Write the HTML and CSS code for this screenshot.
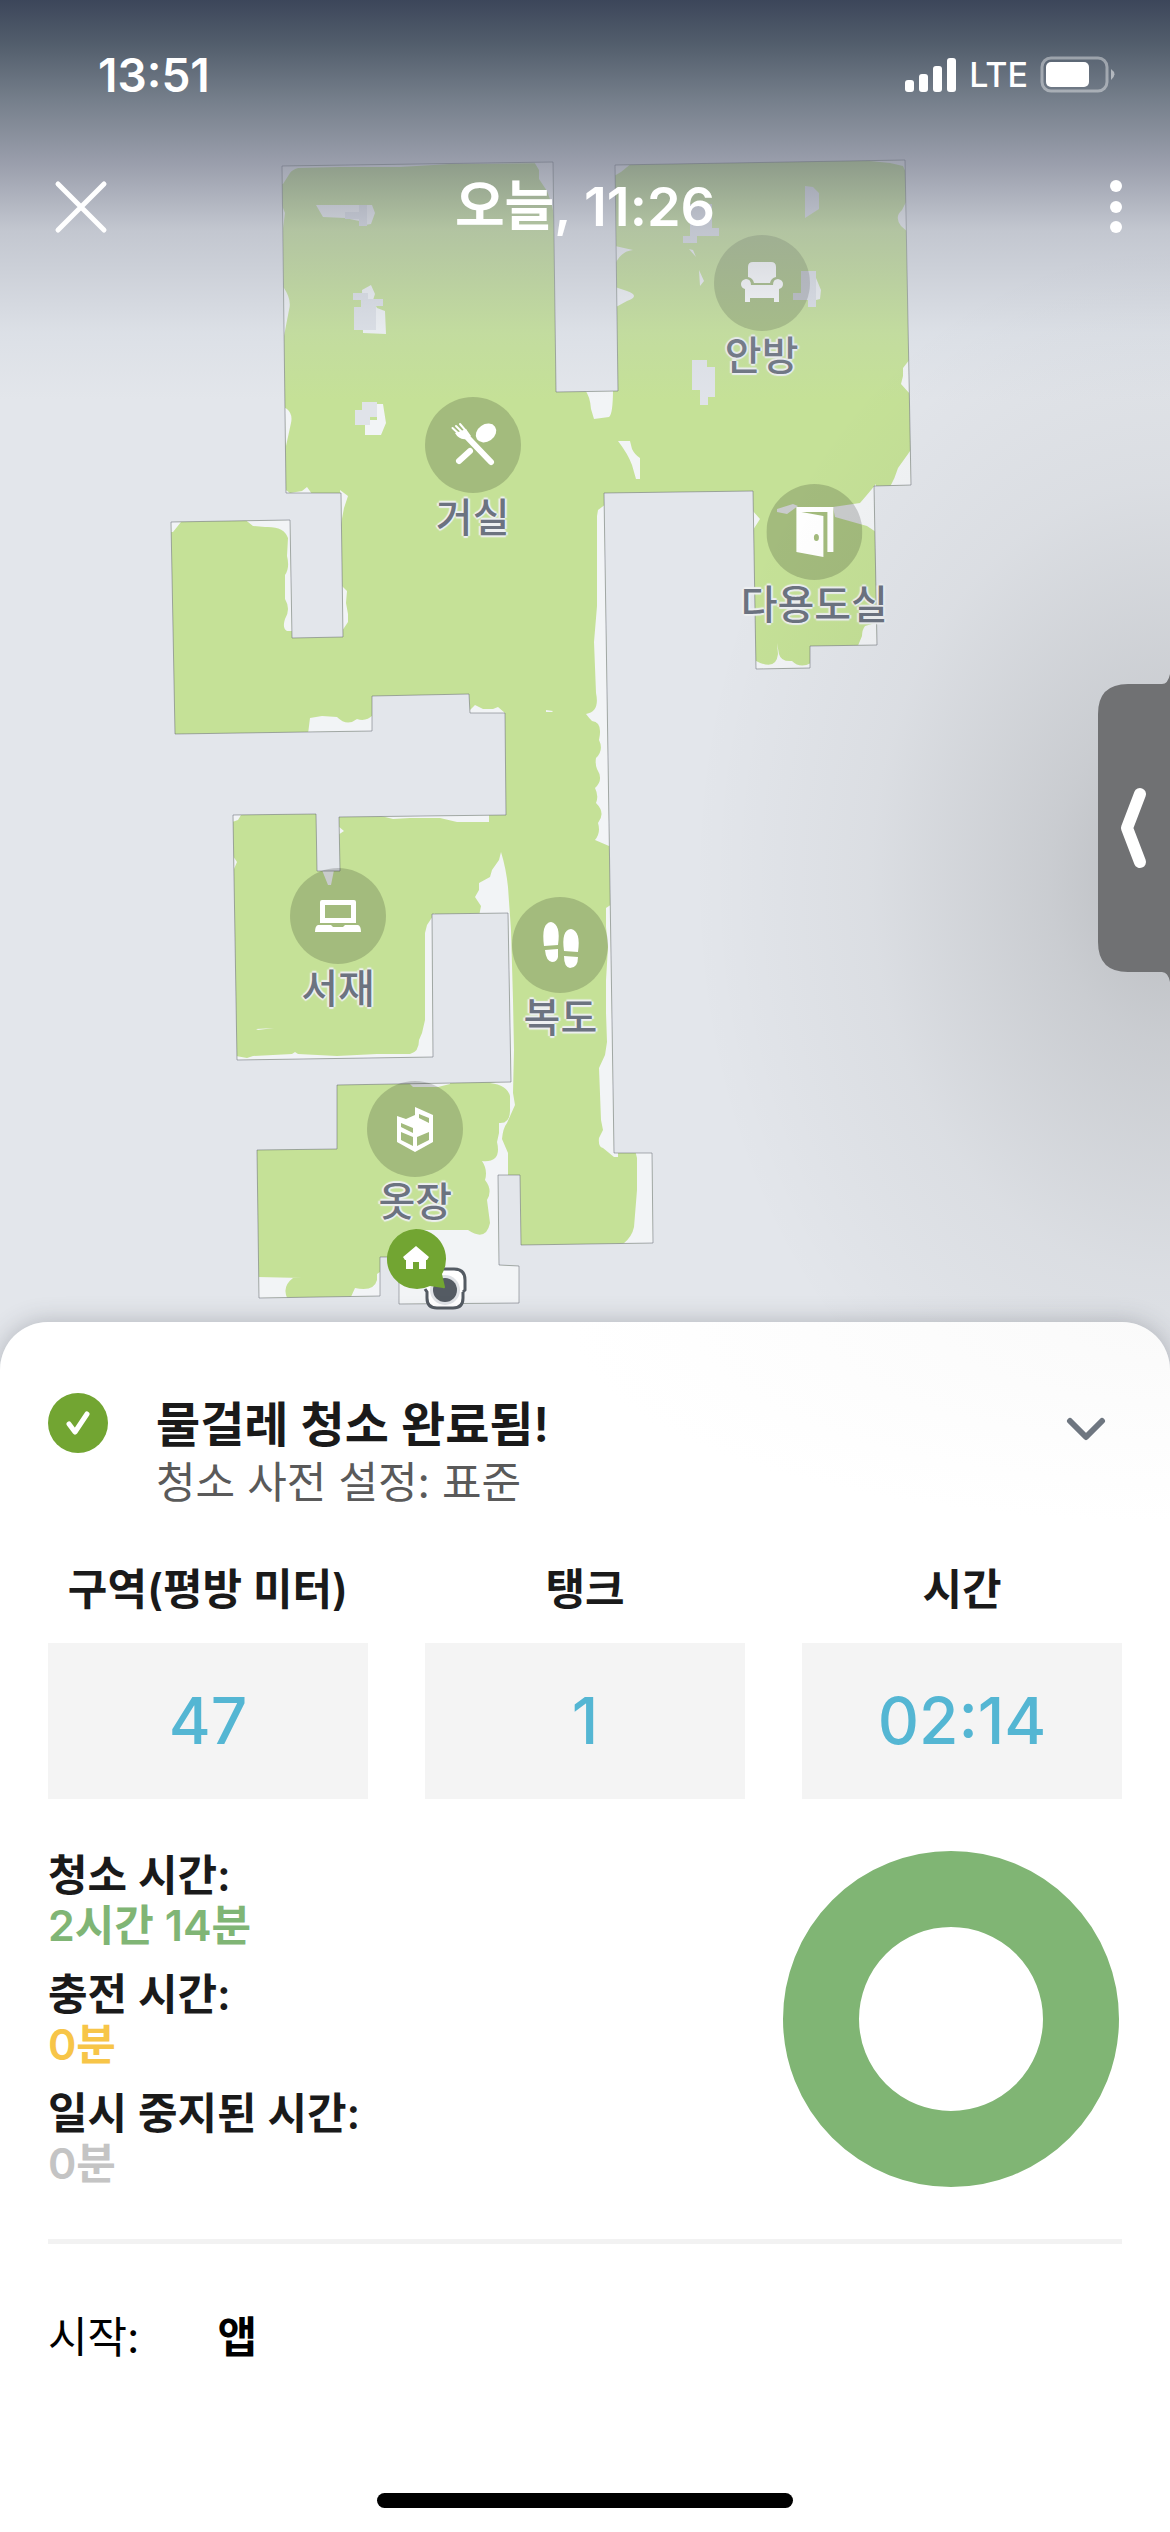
FILE: index.html
```html
<!DOCTYPE html>
<html lang="ko">
<head>
<meta charset="utf-8">
<meta name="viewport" content="width=device-width, initial-scale=1">
<title>청소 기록</title>
<link rel="stylesheet" href="styles.css">
</head>
<body>
<main class="screen">
  <section class="map">
    <svg class="map-plan" viewBox="0 0 1170 1380" aria-hidden="true">
      <defs>
        <path id="plan" d="M282 166L553 162L556 392L618 391L615 165L905 160L911 485L874 486L877 645L810 646L810 668L756 669L753 491L604 493L614 1153L652 1153L653 1243L521 1245L520 1175L498 1175L499 1265L519 1266L519 1303L399 1304L399 1257L380 1257L380 1296L259 1298L257 1150L337 1149L337 1085L511 1082L508 913L432 914L433 1057L237 1060L233 815L316 814L317 871L340 871L339 817L506 815L505 713L470 713L469 694L372 696L372 731L175 734L171 522L290 520L292 638L343 637L341 493L286 493Z"/>
        <clipPath id="plan-clip"><use href="#plan"/></clipPath>
      </defs>
      <use href="#plan" class="cleaned"/>
      <g class="missed" clip-path="url(#plan-clip)">
        <path d="M280 160H556V163L450 164L400 167L340 167L298 168Q292 170 290 173L283 184H280Z"/>
        <path d="M533 160L539 170V179L547 191L552 205L555 222V160Z"/>
        <path d="M280 200L285 213L282 236ZM280 284L284 288Q292 300 289 310L284 336H280ZM280 405L287 409Q293 414 291 423L286 446ZM280 486L290 493L302 491L307 487L312 494H280Z"/>
        <path d="M340 490L348 496L344 508L341 524ZM170 520L181 522L173 532H170Z"/>
        <path d="M243 518L253 526L265 527Q284 526 288 538L287 556Q290 568 285 575V599Q291 609 285 619Q282 628 287 631H294V518Z"/>
        <path d="M342 586L347 591L346 603L348 614V622L342 631Z"/>
        <path d="M308 734L310 718L322 716L337 717Q347 727 357 719Q366 722 373 715V734Z"/>
        <path d="M469 711L475 705L483 709H493L498 707L505 713V716H469ZM546 710L553 711L552 712H546Z"/>
        <path d="M606 504L598 510L597 516V606L594 642L596 693Q600 712 586 714Q589 718 592 721Q603 722 599 740Q604 750 596 758Q595 764 597 769Q604 780 595 788Q599 796 596 803Q606 813 598 823Q601 833 595 840L609 846H616V504Z"/>
        <path d="M612 904L606 908V927L608 947L606 980V1013L607 1042L605 1055L599 1068L601 1120L603 1130L599 1138Q598 1147 603 1148L614 1157H618V904Z"/>
        <path d="M635 1150L637 1158V1190L634 1227Q632 1237 623 1244L656 1246V1150Z"/>
        <path d="M614 163H632L621 172L614 176ZM870 158V161L890 163L903 166L907 175V158ZM907 200L902 210Q894 217 901 226L908 232Z"/>
        <path d="M615 246L633 250Q622 251 616 262ZM615 287L627 291Q641 296 627 301L616 307ZM910 359L903 368V376L901 384L910 394ZM912 448L908 454L898 468Q895 478 890 487H914Z"/>
        <path d="M585 390Q590 396 591 409L594 419L609 417Q613 414 613 389ZM618 441L630 441L632 449Q635 455 640 458V479H636L632 465Q628 454 618 441ZM689 249L693 250L696 257ZM699 270L704 281L700 286ZM816 278L821 290L820 299L816 300Z"/>
        <path d="M752 510L760 519L753 530ZM777 509L793 504L798 506L787 514L777 512ZM833 507L860 503Q867 495 876 484V532L867 526L835 517ZM879 622L865 626Q862 630 862 636L857 648H879Z"/>
        <path d="M754 660Q776 672 778 654L777 643L779 654Q781 662 792 661Q800 669 811 663V671H754Z"/>
        <path d="M362 290L371 285L375 294L373 300L377 308L385 311L386 334L363 333ZM377 404H383L386 423L381 435H365V420H377Z"/>
        <path d="M316 205H372L375 213L371 224L359 226V221L345 218L323 217Z"/>
        <path d="M232 812L241 815L238 820L232 822ZM233 856L237 862L234 869ZM338 826L344 831L338 835ZM377 815L393 819L410 818H440L457 822H489V813ZM256 1029L274 1028L258 1030ZM322 870H334L331 885H328Z"/>
        <path d="M501 852L499 860L492 870L490 877L479 883V890L475 897L481 906L479 916H505L511 1080L490 1083Q507 1085 510 1096V1108Q511 1124 499 1123V1133L497 1142Q502 1163 482 1161Q488 1170 485 1180Q493 1190 487 1200L490 1223Q486 1242 468 1230H423L390 1250V1310H520V1175H508V1153L502 1139Q503 1128 507 1123L515 1105L513 1093L514 1050L513 1000L511 930L508 887Q506 868 501 852Z"/>
        <path d="M435 913L427 925L425 933V1020L422 1033L419 1040Q419 1052 410 1054H377L337 1056L298 1054L295 1052L292 1054L253 1056L247 1058L236 1056V1063H436Z"/>
        <path d="M408 1082L413 1087H438L450 1084V1080ZM255 1277L302 1278H293Q281 1287 288 1300H255ZM350 1299L355 1288Q374 1292 377 1280V1274L383 1270V1300Z"/>
      </g>
      <g class="blocked">
        <path d="M359 205H367V226H359V219H345V212H359ZM353 293H368V299H383V306H376V330H354V307H361V300H353ZM362 402H377V417H370V425H355V410H362Z"/>
        <path d="M690 204H712V228H719V236H697V243H683V236H690ZM805 186L813 187L819 193V209L805 218ZM801 271H816V307H808V300H793V293H801ZM692 360H707V367H715V397H708V405H700V390H692Z"/>
      </g>
      <use href="#plan" class="walls"/>
    </svg>

    <div class="pin pin-dining">
      <svg class="pin-icon" viewBox="0 0 96 96" aria-hidden="true"><circle class="disc" cx="48" cy="48" r="48"/><path class="bar" d="M45 54L34 64"/><ellipse class="ink" cx="61" cy="36" rx="11" ry="8.500" transform="rotate(-35 61 36)"/><path class="bar" d="M42 40L66 65"/><path class="tine" d="M27.500 31L35 38M31 29L38 36M35 27L41 34"/><path class="ink" d="M30 36Q34 43 41 42L46 39L41 32L36 34Z"/></svg>
      <span class="pin-label">거실</span>
    </div>
    <div class="pin pin-bedroom">
      <svg class="pin-icon" viewBox="0 0 96 96" aria-hidden="true"><circle class="disc" cx="48" cy="48" r="48"/><path class="ink" d="M39 27H57Q62 27 62 32V42Q57 43 56 48H40Q39 43 34 42V32Q34 27 39 27ZM32 44Q37 44 37 50H59Q59 44 64 44Q69 45 69 49Q69 53 65 54V67H60V63H36V67H31V54Q27 53 27 49Q27 45 32 44Z"/></svg>
      <span class="pin-label">안방</span>
    </div>
    <div class="pin pin-utility">
      <svg class="pin-icon" viewBox="0 0 96 96" aria-hidden="true"><circle class="disc" cx="48" cy="48" r="48"/><path class="ink" fill-rule="evenodd" d="M30 23H67V68H61V28H35L57 32V73L30 68ZM50 50A2.500 3.500 0 1 0 50 57A2.500 3.500 0 1 0 50 50Z"/></svg>
      <span class="pin-label">다용도실</span>
    </div>
    <div class="pin pin-study">
      <svg class="pin-icon" viewBox="0 0 96 96" aria-hidden="true"><circle class="disc" cx="48" cy="48" r="48"/><path class="ink" fill-rule="evenodd" d="M32 32H64Q66 32 66 34V55H30V34Q30 32 32 32ZM35 37V50H61V37ZM28 57H41L43 59H53L55 57H68Q71 58 71 64H25Q25 58 28 57Z"/></svg>
      <span class="pin-label">서재</span>
    </div>
    <div class="pin pin-hall">
      <svg class="pin-icon" viewBox="0 0 96 96" aria-hidden="true"><circle class="disc" cx="48" cy="48" r="48"/><path class="ink" d="M32 49Q29 26 39 25Q49 27 46 48ZM33 53L46 52V60Q45 65 40 65Q34 64 33 53ZM52 54Q49 33 59 32Q69 34 66 55ZM52 59L66 60Q66 71 58 71Q52 70 52 59Z"/></svg>
      <span class="pin-label">복도</span>
    </div>
    <div class="pin pin-closet">
      <svg class="pin-icon" viewBox="0 0 96 96" aria-hidden="true"><circle class="disc" cx="48" cy="48" r="48"/><path class="ink" fill-rule="evenodd" d="M48 26L66 34V61L48 71L30 61V35L39 38L48 34ZM52 33V37L62 42V37ZM34 42V46L46 52V47ZM34 51V59L46 65V56ZM50 56V65L62 59V51Z"/></svg>
      <span class="pin-label">옷장</span>
    </div>
    <svg class="dock" viewBox="0 0 90 90" aria-hidden="true"><path class="ink" d="M52 44H69Q80 44 80 55V65L78 67V73Q78 83 68 83H52Q42 83 42 73V67L40 65V54Z"/><path class="robot" d="M52 44H69Q80 44 80 55V65L78 67M40 64L42 67V73Q42 83 52 83H68Q78 83 78 73V67"/><circle class="halo" cx="60" cy="65" r="15"/><circle class="lens" cx="60" cy="65" r="12"/><path class="home" d="M31 4A30 30 0 0 1 57 49L60 62Q60 64 58 63L45 61A30 30 0 1 1 31 4Z"/><path class="ink" d="M31 21L44 32L42 35H41V44H34V37H28V44H21V35H20L18 32Z"/></svg>

    <div class="map-glow"></div>
    <div class="map-shade"></div>
    <button class="drawer" type="button" aria-label="패널 열기"><svg class="drawer-icon" viewBox="0 0 72 308" aria-hidden="true"><path class="drawer-body" d="M72 0V308Q70 298 64 298H30Q0 298 0 268V40Q0 10 30 10H64Q70 10 72 0Z"/><path class="drawer-arrow" d="M42 120L29 154L42 188"/></svg></button>

    <header class="top">
      <div class="status">
        <span class="clock">13:51</span>
        <span class="signal">
          <svg class="bars" viewBox="0 0 52 36" aria-hidden="true"><rect x="0" y="23" width="9" height="12" rx="3"/><rect x="14" y="17" width="9" height="18" rx="3"/><rect x="28" y="9" width="9" height="26" rx="3"/><rect x="42" y="1" width="9" height="34" rx="3"/></svg>
          <span class="network">LTE</span>
          <svg class="battery" viewBox="0 0 76 38" aria-hidden="true"><rect class="shell" x="2" y="2" width="65" height="33" rx="9"/><rect class="charge" x="6" y="6" width="43" height="25" rx="5"/><path class="tip" d="M71 13Q78 18 71 24Z"/></svg>
        </span>
      </div>
      <div class="title-bar">
        <button class="icon-button" type="button" aria-label="닫기"><svg class="close" viewBox="-6 0 60 54" aria-hidden="true"><path d="M4 4L50 50M50 4L4 50"/></svg></button>
        <h1 class="title">오늘, 11:26</h1>
        <button class="icon-button" type="button" aria-label="더 보기"><svg class="more" viewBox="0 0 12 54" aria-hidden="true"><circle cx="6" cy="6" r="6"/><circle cx="6" cy="27" r="6"/><circle cx="6" cy="47" r="6"/></svg></button>
      </div>
    </header>
  </section>

  <section class="sheet">
    <div class="result">
      <svg class="check" viewBox="0 0 60 60" aria-hidden="true"><circle cx="30" cy="30" r="30"/><path d="M21 31L27 39L39 21"/></svg>
      <div class="result-text">
        <h2 class="result-title">물걸레 청소 완료됨!</h2>
        <p class="result-note">청소 사전 설정: 표준</p>
      </div>
      <button class="icon-button" type="button" aria-label="접기"><svg class="chevron" viewBox="0 0 40 24" aria-hidden="true"><path d="M4 4L20 20L36 4"/></svg></button>
    </div>
    <dl class="stats">
      <div class="stat"><dt>구역(평방 미터)</dt><dd>47</dd></div>
      <div class="stat"><dt>탱크</dt><dd>1</dd></div>
      <div class="stat"><dt>시간</dt><dd>02:14</dd></div>
    </dl>
    <div class="breakdown">
      <dl class="times">
        <div><dt>청소 시간:</dt><dd class="cleaning">2시간 14분</dd></div>
        <div><dt>충전 시간:</dt><dd class="charging">0분</dd></div>
        <div><dt>일시 중지된 시간:</dt><dd class="paused">0분</dd></div>
      </dl>
      <svg class="donut" viewBox="0 0 336 336" aria-hidden="true"><circle cx="168" cy="168" r="130"/></svg>
    </div>
    <p class="origin"><span>시작:</span><strong>앱</strong></p>
    <div class="home-bar"></div>
  </section>
</main>
</body>
</html>
```
FILE: styles.css
```css
* { box-sizing: border-box; }
body, h1, h2, p, dl, dd { margin: 0; }
body {
  background: #fff;
  color: #1a1a1a;
  font-family: Inter, "Noto Sans CJK KR", sans-serif;
  font-size: 43px;
  line-height: 50px;
}
button { padding: 0; border: 0; background: none; color: inherit; font: inherit; }
svg { display: block; }
.screen { display: flex; flex-direction: column; min-height: 100vh; }

/* Map */
.map { position: relative; overflow: hidden; background: #e3e6eb; }
.map-plan { width: 100%; height: auto; }
.cleaned { fill: #c5e197; }
.missed { fill: #f2f4f6; }
.blocked { fill: #e0e3e9; }
.walls { fill: none; stroke: #60646e; stroke-opacity: .5; stroke-width: 1; }

.pin {
  position: absolute;
  display: flex;
  flex-direction: column;
  align-items: center;
  transform: translateX(-50%);
}
.pin-icon { width: 96px; height: 96px; }
.pin-label {
  color: #6c7380;
  font-size: 40px;
  font-weight: 500;
  line-height: 50px;
  white-space: nowrap;
  text-shadow: 2px 0 1px #eef0f2, -2px 0 1px #eef0f2, 0 2px 1px #eef0f2, 0 -2px 1px #eef0f2;
}
.pin-dining { left: 40.4%; top: 28.8%; }
.pin-bedroom { left: 65.1%; top: 17%; }
.pin-utility { left: 69.6%; top: 35.1%; }
.pin-study { left: 28.9%; top: 62.9%; }
.pin-hall { left: 47.9%; top: 65%; }
.pin-closet { left: 35.5%; top: 78.3%; }
.disc { fill: #000; fill-opacity: .17; }
.ink { fill: #fff; }
.bar { fill: none; stroke: #fff; stroke-width: 6; stroke-linecap: round; }
.tine { fill: none; stroke: #fff; stroke-width: 2; stroke-linecap: round; }
.dock { position: absolute; left: 32.9%; top: 88.8%; width: 90px; height: 90px; }
.robot { fill: none; stroke: #545b63; stroke-width: 3; }
.halo { fill: #dfe2e6; }
.lens { fill: #545b63; }
.home { fill: #72a532; }

.map-shade, .map-glow { position: absolute; inset: 0; pointer-events: none; }
.map-shade {
  background: linear-gradient(rgb(60 70 90) 0, rgb(72 84 99 / .93) 45px, rgb(90 101 115 / .8) 100px, rgb(107 112 131 / .6) 165px, rgb(155 160 174 / .45) 230px, rgb(180 190 204 / .15) 333px, rgb(190 200 210 / 0) 400px);
}
.map-glow {
  background: radial-gradient(480px 640px at 100% 880px, rgb(20 20 20 / .2), rgb(20 20 20 / .12) 25%, rgb(20 20 20 / .04) 62%, rgb(20 20 20 / 0));
}
.drawer { position: absolute; right: 0; top: 674px; }
.drawer-icon { width: 72px; height: 308px; }
.drawer-body { fill: #707173; }
.drawer-arrow { fill: none; stroke: #fff; stroke-width: 12; stroke-linecap: round; stroke-linejoin: round; }

/* Status and title bars */
.top { position: absolute; inset: 0 0 auto; color: #fff; }
.status {
  display: flex;
  justify-content: space-between;
  align-items: center;
  height: 150px;
  padding: 0 54px 0 98px;
}
.clock { font-size: 46px; font-weight: 600; }
.signal { display: flex; align-items: center; gap: 12px; }
.network { font-size: 34px; font-weight: 500; }
.bars { width: 52px; height: 36px; fill: #fff; }
.battery { width: 76px; height: 38px; }
.shell { fill: none; stroke: #fff; stroke-opacity: .4; stroke-width: 3; }
.charge { fill: #fff; }
.tip { fill: #fff; fill-opacity: .5; }
.title-bar {
  display: grid;
  grid-template-columns: 1fr auto 1fr;
  align-items: center;
  height: 114px;
  padding: 0 48px;
}
.title-bar .icon-button { justify-self: start; }
.title-bar .icon-button:last-child { justify-self: end; }
.title { font-size: 54px; font-weight: 600; line-height: 72px; }
.close { width: 60px; height: 54px; fill: none; stroke: #fff; stroke-width: 5; stroke-linecap: round; }
.more { width: 12px; height: 54px; fill: #fff; }

/* Result sheet */
.sheet {
  position: relative;
  flex: 1;
  display: flex;
  flex-direction: column;
  margin-top: -58px;
  padding: 71px 48px 24px;
  border-radius: 48px 48px 0 0;
  background: radial-gradient(600px 200px at 100% 0, #fafafa, #fff);
  box-shadow: 0 0 24px rgb(60 64 72 / .3);
}
.result { display: flex; align-items: flex-start; }
.check { width: 60px; height: 60px; fill: #72a532; }
.check path { fill: none; stroke: #fff; stroke-width: 5; stroke-linecap: round; stroke-linejoin: round; }
.result-text { flex: 1; padding-left: 48px; }
.result-title { font-size: 48px; font-weight: 600; line-height: 64px; }
.result-note { color: #5a5a5a; }
.result .icon-button { padding: 24px 16px; }
.chevron { width: 40px; height: 24px; fill: none; stroke: #6e7680; stroke-width: 6; stroke-linecap: round; stroke-linejoin: round; }
.stats { display: grid; grid-template-columns: repeat(3, 1fr); gap: 57px; margin-top: 57px; text-align: center; }
.stat dt { margin-bottom: 29px; font-weight: 600; }
.stat dd {
  background: #f4f4f4;
  color: #54b6d3;
  font-size: 64px;
  font-weight: 500;
  line-height: 156px;
}
.breakdown {
  display: flex;
  justify-content: space-between;
  align-items: center;
  margin-top: 51px;
  padding-bottom: 51px;
  border-bottom: 5px solid #f2f2f2;
}
.times { display: flex; flex-direction: column; gap: 19px; font-weight: 600; }
.cleaning { color: #80b575; }
.charging { color: #f7c548; }
.paused { color: #c4c4c4; }
.donut { width: 336px; height: 336px; margin-right: 3px; fill: none; stroke: #80b574; stroke-width: 76; }
.origin { display: flex; gap: 78px; margin-top: 68px; color: #000; }
.home-bar { width: 416px; height: 15px; margin: auto auto 0; border-radius: 8px; background: #000; }
```
